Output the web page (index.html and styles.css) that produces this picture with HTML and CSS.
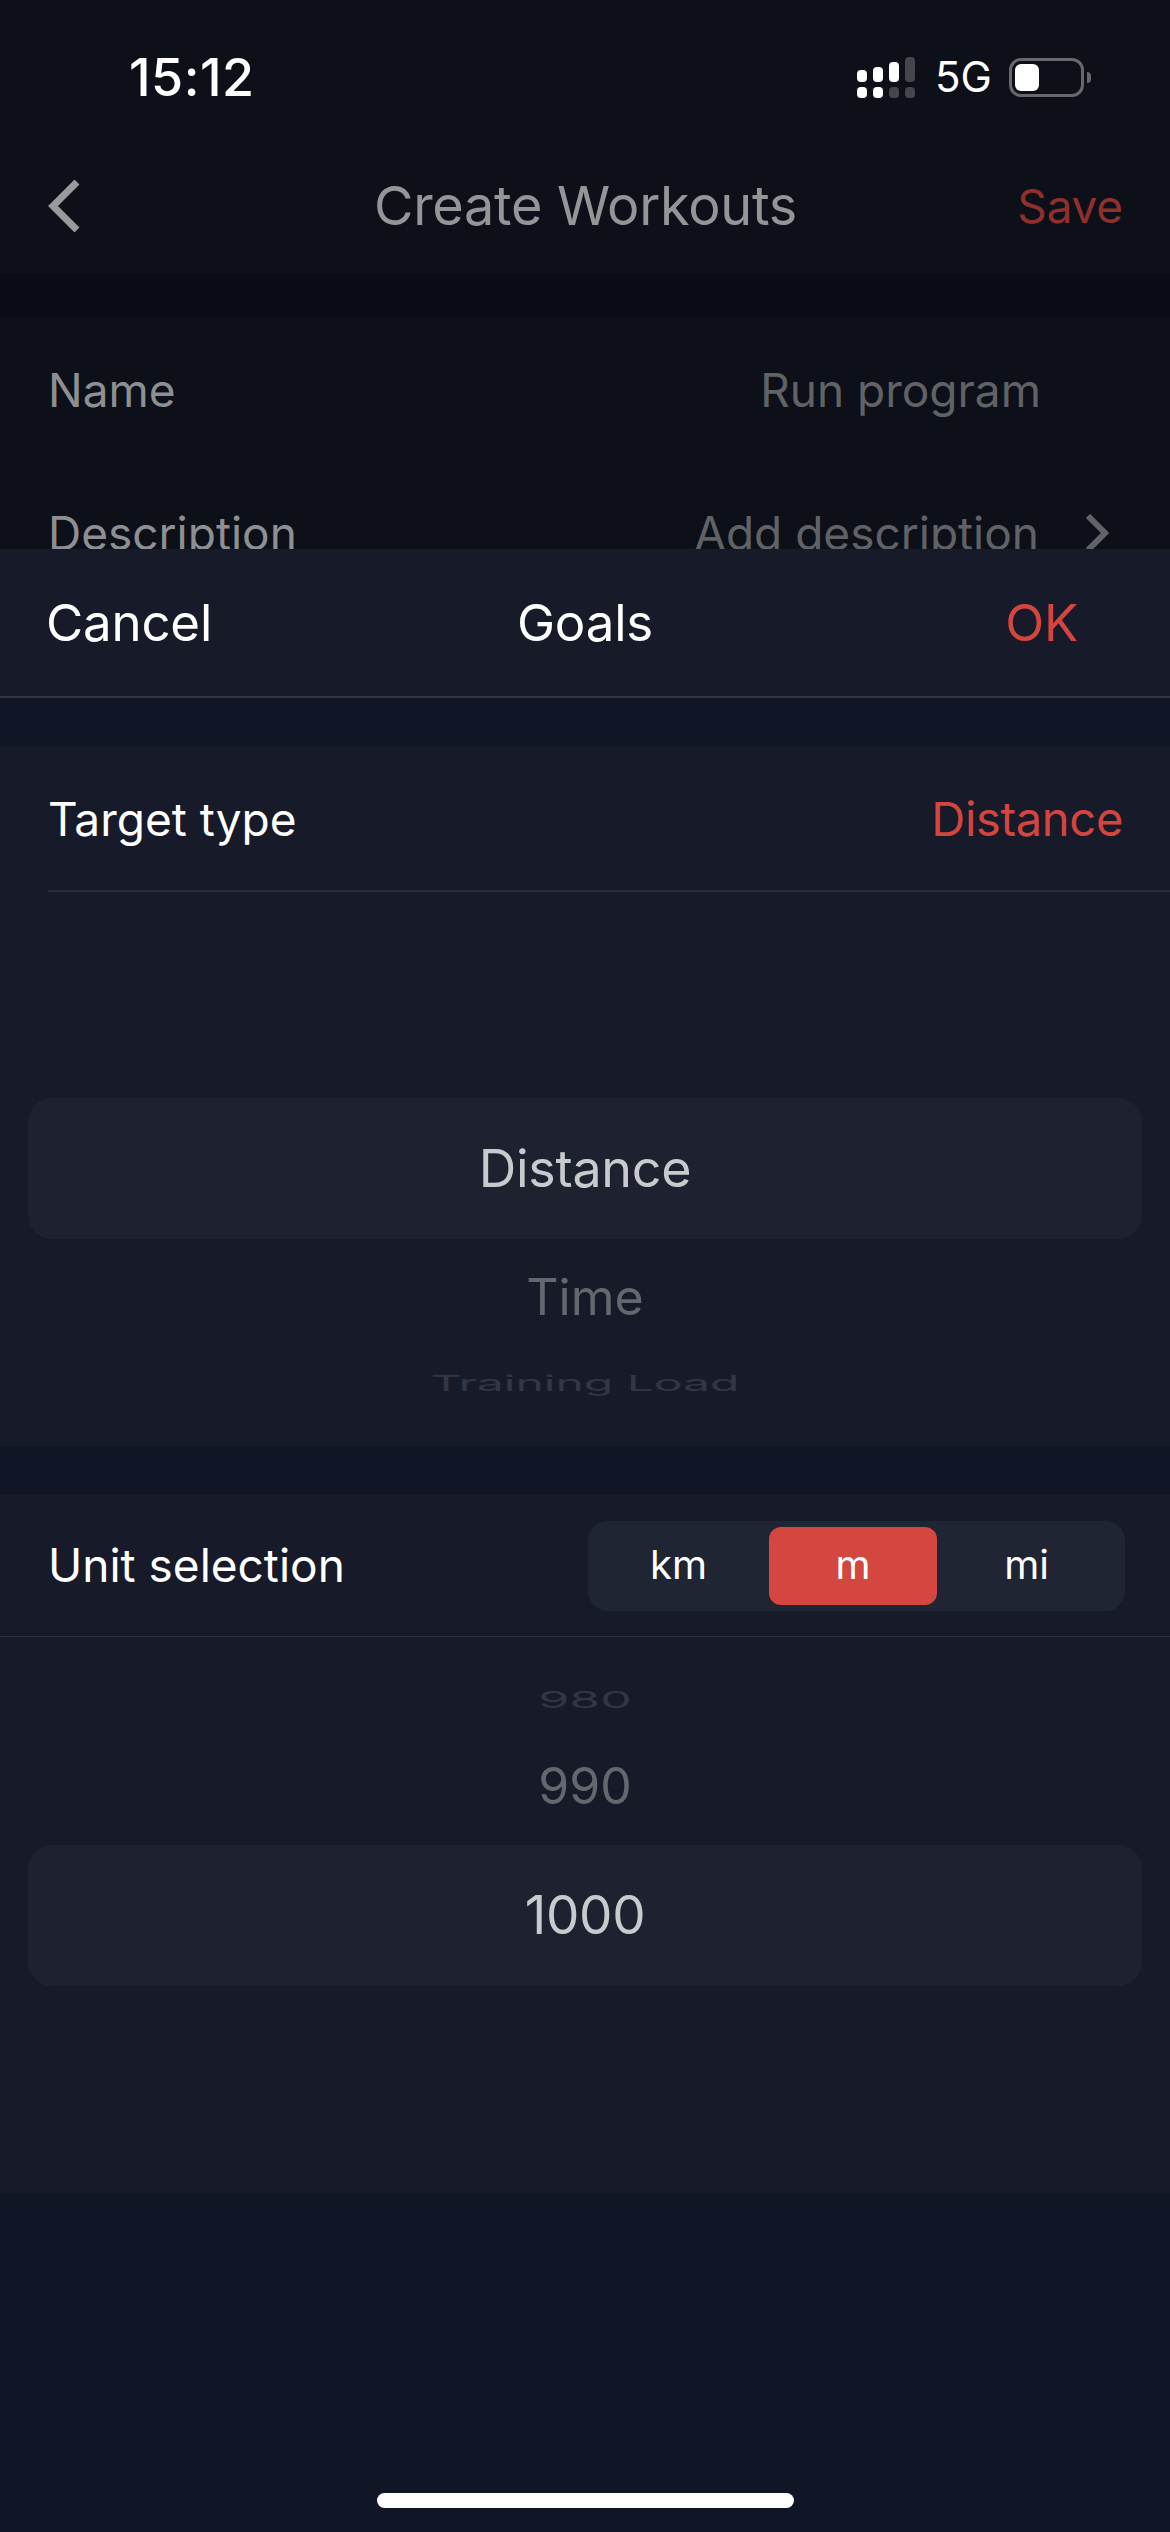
FILE: index.html
```html
<!DOCTYPE html>
<html lang="en">
<head>
    <meta charset="UTF-8">
    <title>Create Workouts</title>
    <link rel="stylesheet" href="styles.css">
</head>
<body>
<div class="screen">

    <!-- dimmed page behind the sheet -->
    <div class="backdrop">
        <div class="top">
            <div class="status">
                <span class="clock">15:12</span>
                <div class="status-right">
                    <svg class="signal" width="58" height="42" viewBox="0 0 58 42">
                        <g fill="#fff">
                            <rect x="0" y="13" width="10" height="12" rx="4"/>
                            <rect x="16" y="10" width="10" height="15" rx="4"/>
                            <rect x="32" y="5" width="10" height="20" rx="4"/>
                            <rect x="0" y="30" width="10" height="11" rx="4"/>
                            <rect x="16" y="30" width="10" height="11" rx="4"/>
                        </g>
                        <g fill="#43464d">
                            <rect x="48" y="0" width="10" height="25" rx="4"/>
                            <rect x="32" y="30" width="10" height="11" rx="4"/>
                            <rect x="48" y="30" width="10" height="11" rx="4"/>
                        </g>
                    </svg>
                    <span class="net">5G</span>
                    <div class="battery"><div class="battery-fill"></div></div>
                    <div class="battery-nub"></div>
                </div>
            </div>
            <div class="nav">
                <svg class="back" width="32" height="52" viewBox="0 0 32 52"><path d="M29 2 L5 26 L29 50" fill="none" stroke="#999a9b" stroke-width="7"/></svg>
                <span class="nav-title">Create Workouts</span>
                <span class="nav-save">Save</span>
            </div>
        </div>
        <div class="form">
            <div class="form-row">
                <span class="form-label">Name</span>
                <span class="form-value name-value">Run program</span>
            </div>
            <div class="form-row">
                <span class="form-label">Description</span>
                <span class="form-value">Add description</span>
                <svg class="more" width="26" height="38" viewBox="0 0 26 38"><path d="M4 2 L21 19 L4 36" fill="none" stroke="#626366" stroke-width="6"/></svg>
            </div>
        </div>
    </div>

    <!-- goals sheet -->
    <div class="sheet-head">
        <span class="head-btn">Cancel</span>
        <span class="head-title">Goals</span>
        <span class="head-ok">OK</span>
    </div>

    <div class="panel target-panel">
        <div class="target-row">
            <span class="row-label">Target type</span>
            <span class="row-value">Distance</span>
        </div>
        <div class="picker type-picker">
            <div class="picker-current">Distance</div>
            <div class="picker-near">Time</div>
            <div class="picker-far">Training Load</div>
        </div>
    </div>

    <div class="panel unit-panel">
        <div class="unit-row">
            <span class="row-label">Unit selection</span>
            <div class="segment">
                <span class="segment-item">km</span>
                <span class="segment-item on">m</span>
                <span class="segment-item">mi</span>
            </div>
        </div>
        <div class="picker value-picker">
            <div class="picker-far">980</div>
            <div class="picker-near">990</div>
            <div class="picker-current number">1000</div>
        </div>
    </div>

    <div class="home-area"><div class="home-bar"></div></div>
</div>
</body>
</html>
```

FILE: styles.css
```css
*{
    padding: 0;
    margin: 0;
    box-sizing: border-box;
}
body{
    background-color: #101626;
    font-family: Inter, "Liberation Sans", sans-serif;
}
.screen{
    width: 1170px;
    height: 2532px;
    overflow: hidden;
    display: flex;
    flex-direction: column;
    background-color: #101626;
}

/* dimmed page */
.backdrop{
    height: 549px;
    flex-shrink: 0;
    overflow: hidden;
    background-color: #0a0c15;
}
.top{
    height: 273px;
    background-color: #0d1019;
}
.status{
    height: 120px;
    padding: 47px 0 0 129px;
    display: flex;
    justify-content: space-between;
}
.clock{
    color: #fff;
    font-size: 52px;
    line-height: 62px;
    font-weight: 500;
    letter-spacing: 0.5px;
}
.status-right{
    display: flex;
    align-items: flex-start;
    padding: 10px 79px 0 0;
}
.signal{
    margin: 0 20px 0 0;
    flex-shrink: 0;
}
.net{
    color: #fff;
    font-size: 42px;
    line-height: 40px;
    margin: 0 20px 0 0;
    width: 54px;
}
.battery{
    width: 75px;
    height: 39px;
    margin-top: 1px;
    border: 3px solid #67686e;
    border-radius: 12px;
    padding: 3px;
}
.battery-fill{
    width: 24px;
    height: 27px;
    background-color: #fff;
    border-radius: 6px;
}
.battery-nub{
    width: 4px;
    height: 11px;
    margin: 15px 0 0 3px;
    background-color: #67686e;
    border-radius: 0 5px 5px 0;
}
.nav{
    height: 153px;
    padding: 18px 47px 0 48px;
    display: grid;
    grid-template-columns: 1fr auto 1fr;
    align-items: center;
}
.nav-title{
    color: #949596;
    font-size: 54px;
    line-height: 66px;
    letter-spacing: -0.3px;
}
.nav-save{
    color: #8f302c;
    font-size: 46px;
    line-height: 60px;
    letter-spacing: -0.2px;
    text-align: right;
}
.form{
    margin-top: 45px;
    background-color: #0d1019;
    height: 300px;
}
.form-row{
    height: 143px;
    padding-left: 48px;
    display: flex;
    align-items: center;
}
.form-label{
    color: #8e8f92;
    font-size: 46px;
    flex: 1;
}
.form-value{
    color: #616266;
    font-size: 46px;
}
.name-value{
    margin-right: 129px;
}
.more{
    margin: 0 60px 0 45px;
}

/* sheet */
.sheet-head{
    height: 149px;
    flex-shrink: 0;
    background-color: #171b29;
    border-bottom: 2px solid #33363f;
    display: grid;
    grid-template-columns: 1fr auto 1fr;
    align-items: center;
    padding: 0 46px;
    color: #fff;
    font-size: 51px;
    letter-spacing: -0.2px;
}
.head-ok{
    color: #d4453f;
    text-align: right;
    padding-right: 46px;
}
.panel{
    background-color: #171b29;
    flex-shrink: 0;
}
.target-panel{
    margin-top: 49px;
    height: 699px;
}
.target-row{
    height: 145px;
    margin-left: 48px;
    padding-right: 47px;
    border-bottom: 2px solid #2a2d38;
    display: flex;
    align-items: center;
    justify-content: space-between;
}
.row-label{
    color: #fff;
    font-size: 46px;
}
.row-value{
    color: #d4453f;
    font-size: 47px;
    letter-spacing: -0.3px;
}
.picker{
    padding: 0 28px;
    text-align: center;
}
.type-picker{
    padding-top: 206px;
}
.picker-current{
    height: 141px;
    line-height: 141px;
    background-color: #1e2230;
    border-radius: 24px;
    color: #c9cacd;
    font-size: 52px;
    letter-spacing: -0.3px;
}
.picker-current.number{
    font-size: 53px;
}
.picker-near{
    height: 116px;
    line-height: 116px;
    color: #65676e;
    font-size: 50px;
}
.picker-far{
    height: 56px;
    line-height: 56px;
    color: #333644;
    font-size: 48px;
    transform: scaleY(0.46);
}
.unit-panel{
    margin-top: 48px;
    height: 699px;
}
.unit-row{
    height: 143px;
    padding: 0 45px 0 48px;
    border-bottom: 1px solid #2a2d38;
    display: flex;
    align-items: center;
    justify-content: space-between;
}
.segment{
    width: 537px;
    height: 90px;
    padding: 6px;
    margin-top: 2px;
    background-color: #202534;
    border-radius: 20px;
    display: grid;
    grid-template-columns: 175px 168px 1fr;
}
.segment-item{
    color: #fff;
    font-size: 40px;
    line-height: 76px;
    text-align: center;
    border-radius: 12px;
}
.segment-item:first-child{
    padding-right: 6px;
}
.segment-item:last-child{
    padding-right: 3px;
}
.segment-item.on{
    background-color: #d44740;
}
.value-picker{
    padding-top: 36px;
}
.value-picker .picker-far{
    height: 54px;
    line-height: 54px;
    font-size: 50px;
}
.value-picker .picker-near{
    height: 118px;
    line-height: 118px;
}
.home-area{
    flex: 1;
    display: flex;
    justify-content: center;
    align-items: flex-end;
    padding-bottom: 24px;
}
.home-bar{
    width: 417px;
    height: 15px;
    background-color: #fff;
    border-radius: 8px;
}
```
